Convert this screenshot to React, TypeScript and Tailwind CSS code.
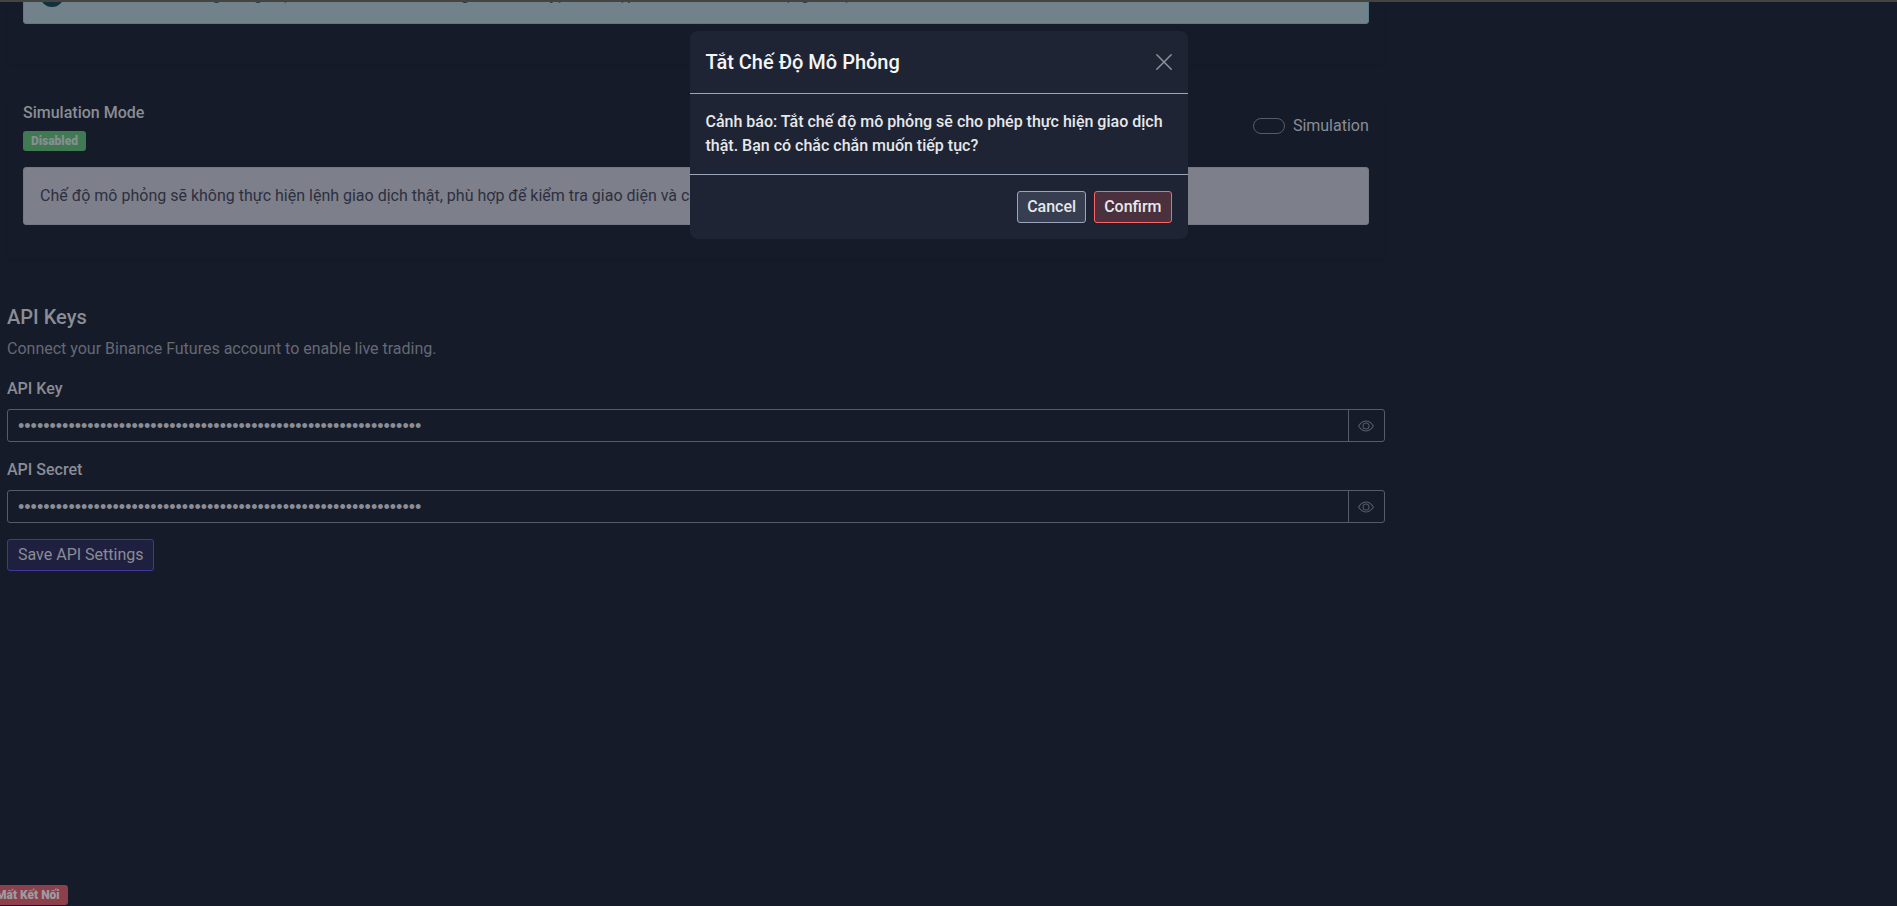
import { useState } from 'react';
import { BsEye } from 'react-icons/bs';

const MASKED_SECRET = '0'.repeat(64);

function SecretField({ id, label }: { id: string; label: string }) {
  const [visible, setVisible] = useState(false);
  return (
    <div className="mb-4">
      <label htmlFor={id} className="mb-2 block font-medium">
        {label}
      </label>
      <div className="flex h-[33px] rounded-[3px] border border-[#565c6b]">
        <input
          id={id}
          type={visible ? 'text' : 'password'}
          defaultValue={MASKED_SECRET}
          className="min-w-0 flex-1 bg-transparent px-2.5 font-['Liberation_Sans',sans-serif] text-[18px] text-[#8a8d94] outline-none"
        />
        <button
          type="button"
          aria-label={`Show ${label}`}
          onClick={() => setVisible(!visible)}
          className="flex w-9 items-center justify-center border-l border-[#565c6b] text-[#565c6b]"
        >
          <BsEye size={16} />
        </button>
      </div>
    </div>
  );
}

function ConfirmDialog() {
  return (
    <div className="fixed inset-0 flex items-start justify-center pt-[31px] pr-5">
      <div
        role="dialog"
        aria-modal="true"
        aria-labelledby="dialog-title"
        className="w-full max-w-[498px] rounded-lg bg-[#1e2433] font-medium text-[#e6e8ec]"
      >
        <header className="flex items-center justify-between border-b border-[#9ba6bb] p-4">
          <h2 id="dialog-title" className="text-[20px] leading-[30px] text-[#f4f5f7]">
            Tắt Chế Độ Mô Phỏng
          </h2>
          <button type="button" aria-label="Close" className="text-[#8e9199]">
            <svg viewBox="0 0 16 16" className="size-4" fill="none" stroke="currentColor" strokeWidth="1.5" strokeLinecap="round">
              <path d="M.8.8l14.4 14.4M15.2.8L.8 15.2" />
            </svg>
          </button>
        </header>
        <p className="p-4">
          Cảnh báo: Tắt chế độ mô phỏng sẽ cho phép thực hiện giao dịch thật. Bạn có chắc chắn muốn tiếp tục?
        </p>
        <footer className="flex justify-end gap-2 border-t border-[#9ba6bb] p-4">
          <button type="button" className="h-8 rounded-[3px] border border-[#9ba6bb] bg-[#373e50] px-[9px]">
            Cancel
          </button>
          <button type="button" className="h-8 rounded-[3px] border border-[#ff6464] bg-[#4b303d] px-[9px]">
            Confirm
          </button>
        </footer>
      </div>
    </div>
  );
}

export default function App() {
  return (
    <div className="min-h-screen overflow-hidden border-t-2 border-[#464443] bg-[#161b2a] font-['Roboto','Noto_Sans',sans-serif] text-[16px] leading-6 text-[#8a8d94]">
      <main className="w-[73%] pl-[7px]">
        <section className="-mt-9 rounded px-4 pb-10 shadow-[0_2px_4px_rgba(0,0,0,0.03)]">
          <div className="flex items-center gap-5 rounded-[3px] border border-[#567e88] bg-[#72828b] p-4 text-[#1b3a49]">
            <span className="size-6 shrink-0 rounded-full bg-[#0f323e]" />
            <p>
              Cho bot live trading trong một tài khoản Binance <strong>mới giao thức kép,</strong> nhiều hợp và theo
              dõi nhanh mọi giao dịch
            </p>
          </div>
        </section>

        <section className="mt-[33px] rounded px-4 pt-1 pb-8 shadow-[0_2px_4px_rgba(0,0,0,0.03)]">
          <div className="mb-4 flex items-center justify-between">
            <div>
              <h3 className="font-medium">Simulation Mode</h3>
              <span className="mt-1.5 block w-fit rounded-[3px] bg-[#3f7a52] px-2 text-[12px] leading-5 font-black">
                Disabled
              </span>
            </div>
            <label className="flex items-center gap-2">
              <input
                type="checkbox"
                role="switch"
                className="h-4 w-8 appearance-none rounded-full border border-[#565c6b]"
              />
              Simulation
            </label>
          </div>
          <p className="rounded-[3px] border border-[#757882] bg-[#7d808a] p-4 text-[#2d2f40]">
            Chế độ mô phỏng sẽ không thực hiện lệnh giao dịch thật, phù hợp để kiểm tra giao diện và chức năng.
          </p>
        </section>

        <section className="mt-12">
          <h2 className="mb-2 text-[20px] font-medium">API Keys</h2>
          <p className="mb-4 text-[#656973]">Connect your Binance Futures account to enable live trading.</p>
          <form onSubmit={(event) => event.preventDefault()}>
            <SecretField id="api-key" label="API Key" />
            <SecretField id="api-secret" label="API Secret" />
            <button type="submit" className="h-8 rounded-[3px] border border-[#44379a] bg-[#1f2040] px-2.5">
              Save API Settings
            </button>
          </form>
        </section>
      </main>

      <div className="fixed bottom-px -left-3 rounded-[3px] bg-[#8c404b] px-2 text-[12px] leading-5 font-black text-[#9c9ca3]">
        Mất Kết Nối
      </div>

      <ConfirmDialog />
    </div>
  );
}
